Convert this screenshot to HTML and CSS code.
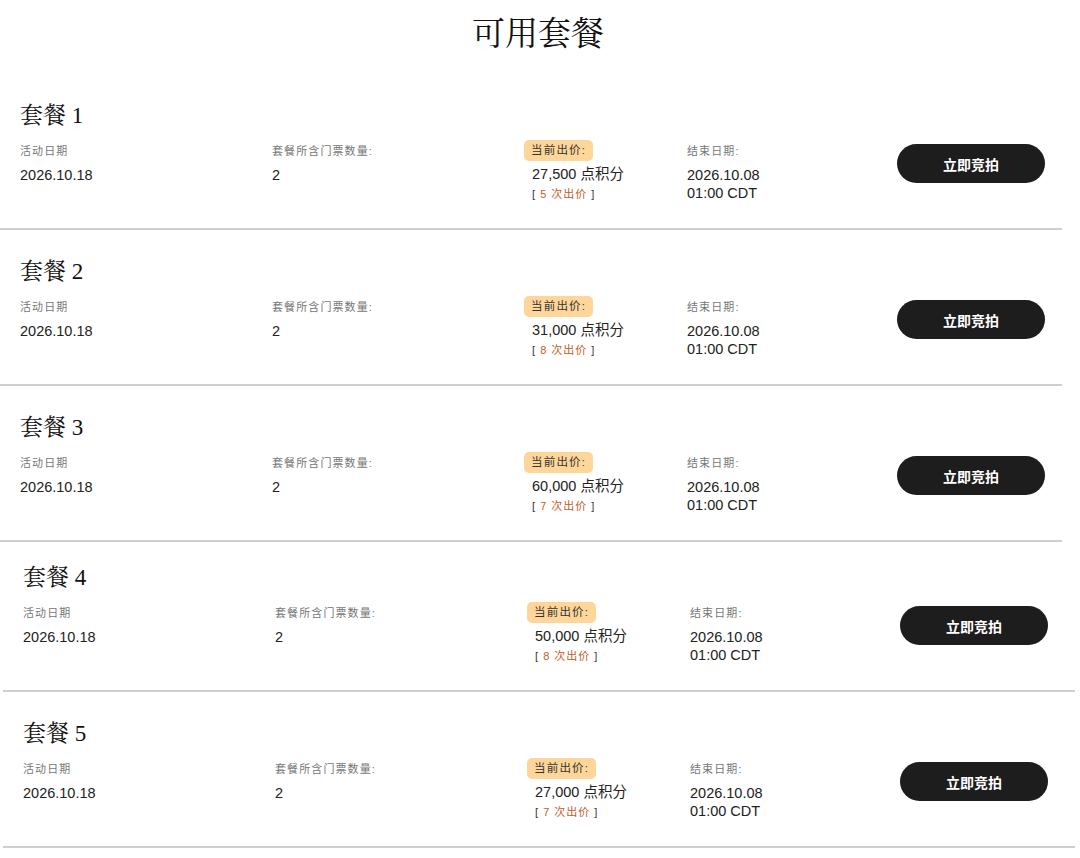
FILE: index.html
```html
<!DOCTYPE html>
<html lang="zh-CN">
<head>
    <meta charset="UTF-8">
    <meta name="viewport" content="width=device-width, initial-scale=1.0">
    <title>可用套餐</title>
    <link rel="stylesheet" href="styles.css">
</head>
<body>
    <h1 class="page-title">可用套餐</h1>

    <div class="package">
        <h2 class="package-name">套餐 1</h2>
        <div class="package-row">
            <div class="field">
                <div class="label">活动日期</div>
                <div class="value">2026.10.18</div>
            </div>
            <div class="field">
                <div class="label">套餐所含门票数量:</div>
                <div class="value">2</div>
            </div>
            <div class="field price">
                <span class="badge">当前出价:</span>
                <div class="value points">27,500 点积分</div>
                <div class="bids">[ <span class="bid-count">5 次出价</span> ]</div>
            </div>
            <div class="field">
                <div class="label">结束日期:</div>
                <div class="value">2026.10.08<br>01:00 CDT</div>
            </div>
            <button class="bid-btn">立即竞拍</button>
        </div>
    </div>

    <div class="package">
        <h2 class="package-name">套餐 2</h2>
        <div class="package-row">
            <div class="field">
                <div class="label">活动日期</div>
                <div class="value">2026.10.18</div>
            </div>
            <div class="field">
                <div class="label">套餐所含门票数量:</div>
                <div class="value">2</div>
            </div>
            <div class="field price">
                <span class="badge">当前出价:</span>
                <div class="value points">31,000 点积分</div>
                <div class="bids">[ <span class="bid-count">8 次出价</span> ]</div>
            </div>
            <div class="field">
                <div class="label">结束日期:</div>
                <div class="value">2026.10.08<br>01:00 CDT</div>
            </div>
            <button class="bid-btn">立即竞拍</button>
        </div>
    </div>

    <div class="package">
        <h2 class="package-name">套餐 3</h2>
        <div class="package-row">
            <div class="field">
                <div class="label">活动日期</div>
                <div class="value">2026.10.18</div>
            </div>
            <div class="field">
                <div class="label">套餐所含门票数量:</div>
                <div class="value">2</div>
            </div>
            <div class="field price">
                <span class="badge">当前出价:</span>
                <div class="value points">60,000 点积分</div>
                <div class="bids">[ <span class="bid-count">7 次出价</span> ]</div>
            </div>
            <div class="field">
                <div class="label">结束日期:</div>
                <div class="value">2026.10.08<br>01:00 CDT</div>
            </div>
            <button class="bid-btn">立即竞拍</button>
        </div>
    </div>

    <div class="package shifted first-shifted">
        <h2 class="package-name">套餐 4</h2>
        <div class="package-row">
            <div class="field">
                <div class="label">活动日期</div>
                <div class="value">2026.10.18</div>
            </div>
            <div class="field">
                <div class="label">套餐所含门票数量:</div>
                <div class="value">2</div>
            </div>
            <div class="field price">
                <span class="badge">当前出价:</span>
                <div class="value points">50,000 点积分</div>
                <div class="bids">[ <span class="bid-count">8 次出价</span> ]</div>
            </div>
            <div class="field">
                <div class="label">结束日期:</div>
                <div class="value">2026.10.08<br>01:00 CDT</div>
            </div>
            <button class="bid-btn">立即竞拍</button>
        </div>
    </div>

    <div class="package shifted">
        <h2 class="package-name">套餐 5</h2>
        <div class="package-row">
            <div class="field">
                <div class="label">活动日期</div>
                <div class="value">2026.10.18</div>
            </div>
            <div class="field">
                <div class="label">套餐所含门票数量:</div>
                <div class="value">2</div>
            </div>
            <div class="field price">
                <span class="badge">当前出价:</span>
                <div class="value points">27,000 点积分</div>
                <div class="bids">[ <span class="bid-count">7 次出价</span> ]</div>
            </div>
            <div class="field">
                <div class="label">结束日期:</div>
                <div class="value">2026.10.08<br>01:00 CDT</div>
            </div>
            <button class="bid-btn">立即竞拍</button>
        </div>
    </div>
</body>
</html>
```

FILE: styles.css
```css
* {
    box-sizing: border-box;
}
body {
    margin: 0;
    background: #fff;
    color: #222;
    font-family: "Liberation Sans", "Noto Sans CJK SC", sans-serif;
}
.page-title {
    margin: 14px 0 20px;
    width: 1076px;
    text-align: center;
    font-family: "Liberation Serif", "Noto Serif CJK SC", "Noto Sans CJK SC", serif;
    font-size: 33px;
    line-height: 40px;
    font-weight: normal;
    color: #111;
}
.package {
    width: 1062px;
    padding: 27px 17px 26px 20px;
    border-bottom: 2px solid #cfcfcf;
}
.package.shifted {
    margin-left: 3px;
    width: 1072px;
    padding-right: 27px;
}
.package.first-shifted {
    margin-top: -6px;
}
.package-name {
    margin: 0 0 12px;
    font-family: "Liberation Serif", "Noto Serif CJK SC", "Noto Sans CJK SC", serif;
    font-size: 23px;
    line-height: 30px;
    font-weight: normal;
    color: #111;
}
.package-row {
    display: grid;
    grid-template-columns: 252px 252px 163px 1fr 148px;
    align-items: start;
}
.label {
    font-size: 11px;
    line-height: 16px;
    letter-spacing: 1.1px;
    color: #777;
    margin-bottom: 7px;
}
.value {
    font-size: 14.5px;
    line-height: 18px;
    color: #222;
}
.price {
    display: flex;
    flex-direction: column;
    align-items: flex-start;
}
.badge {
    margin-top: -3px;
    padding: 0 7px;
    height: 21px;
    line-height: 21px;
    font-size: 11.5px;
    letter-spacing: 1.2px;
    color: #333;
    background: #fed699;
    border-radius: 5px;
}
.points {
    margin-top: 4px;
    padding-left: 8px;
}
.bids {
    margin-top: 3px;
    padding-left: 8px;
    font-size: 11px;
    line-height: 16px;
    letter-spacing: 1px;
    color: #333;
}
.bid-count {
    color: #c0602b;
}
.bid-btn {
    margin-top: 1px;
    width: 148px;
    height: 39px;
    border: none;
    border-radius: 20px;
    background: #1d1d1d;
    color: #fff;
    font-family: "Liberation Sans", "Noto Sans CJK SC", sans-serif;
    font-size: 14px;
    font-weight: 600;
    cursor: pointer;
}
```
